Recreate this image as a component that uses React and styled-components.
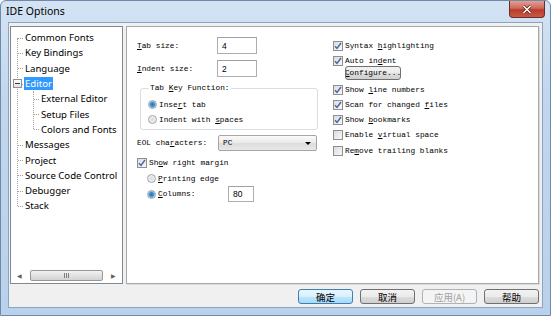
import React from "react";
import styled, { createGlobalStyle } from "styled-components";

const GlobalStyle = createGlobalStyle`
  html, body {
    margin: 0;
    padding: 0;
    background: #ffffff;
  }
  body {
    width: 551px;
    height: 316px;
    overflow: hidden;
  }
`;

const Window = styled.div`
  width: 551px;
  height: 316px;
  box-sizing: border-box;
  display: flex;
  flex-direction: column;
  background: linear-gradient(to bottom, #d3e3f4 0%, #c2d7ee 30%, #b9d1ea 100%);
  border: 1px solid #6f89a8;
  border-radius: 6px 6px 0 0;
  font-family: "Noto Sans", "Liberation Sans", sans-serif;
`;

const TitleBar = styled.div`
  height: 21px;
  flex: none;
  display: flex;
  justify-content: space-between;
  align-items: flex-start;
  padding-left: 5px;
`;

const Title = styled.div`
  font-size: 10.5px;
  line-height: 20px;
  color: #000;
`;

const CloseButton = styled.div`
  width: 36px;
  height: 17px;
  margin-right: 5px;
  box-sizing: border-box;
  border: 1px solid #6e2c27;
  border-top: none;
  border-radius: 0 0 4px 4px;
  background: linear-gradient(to bottom, #e29f93 0%, #d0695a 45%, #b83b2c 55%, #c75a46 100%);
  display: flex;
  align-items: center;
  justify-content: center;
`;

const Client = styled.div`
  flex: 1;
  margin: 0 7px 7px 7px;
  box-sizing: border-box;
  background: #f0f0f0;
  border: 1px solid #8da4c1;
  padding: 3px 3px 3px 1px;
  display: flex;
  flex-direction: column;
`;

const Main = styled.div`
  height: 258px;
  display: flex;
  gap: 3px;
`;

const TreeBox = styled.div`
  width: 113px;
  box-sizing: border-box;
  background: #fff;
  border: 1px solid #828790;
  display: flex;
  flex-direction: column;
`;

const TreeList = styled.div`
  flex: 1;
  padding-top: 3px;
  font-size: 9.6px;
  color: #000;
`;

const Branch = styled.div`
  position: relative;
  &::before {
    content: "";
    position: absolute;
    left: ${p => p.$x}px;
    top: ${p => p.$top}px;
    height: ${p => p.$height}px;
    border-left: 1px dotted #a0a0a0;
  }
`;

const TreeRow = styled.div`
  position: relative;
  height: 15.3px;
  display: flex;
  align-items: center;
  padding-left: ${p => p.$level * 16 + 13}px;
  white-space: nowrap;
  &::after {
    content: "";
    position: absolute;
    left: ${p => p.$level * 16 + 7}px;
    width: 5px;
    top: 50%;
    border-top: 1px dotted #a0a0a0;
  }
`;

const TreeLabel = styled.span`
  padding: 0 1px;
  line-height: 13px;
  background: ${p => (p.$selected ? "#3399ff" : "transparent")};
  color: ${p => (p.$selected ? "#fff" : "#000")};
`;

const Expander = styled.div`
  position: absolute;
  left: 2px;
  top: 3px;
  width: 9px;
  height: 9px;
  box-sizing: border-box;
  border: 1px solid #919191;
  background: linear-gradient(to bottom, #fff, #e3e3e3);
  z-index: 1;
  &::after {
    content: "";
    position: absolute;
    left: 1px;
    top: 3px;
    width: 5px;
    border-top: 1px solid #3c3c3c;
  }
`;

const HScroll = styled.div`
  height: 15px;
  flex: none;
  display: flex;
  align-items: center;
  background: #fff;
  padding: 0 1px;
`;

const ScrollArrow = styled.div`
  width: 15px;
  height: 13px;
  display: flex;
  align-items: center;
  justify-content: center;
  color: #606060;
  font-size: 6px;
`;

const Thumb = styled.div`
  flex: 1;
  height: 11px;
  margin: 0 3px;
  box-sizing: border-box;
  border: 1px solid #979797;
  border-radius: 2px;
  background: linear-gradient(to bottom, #f3f3f3, #e2e2e2 50%, #d2d2d2);
  display: flex;
  align-items: center;
  justify-content: center;
  gap: 1px;
`;

const Grip = styled.span`
  width: 1px;
  height: 5px;
  background: #7d7d7d;
`;

const Panel = styled.div`
  flex: 1;
  box-sizing: border-box;
  background: #fff;
  border: 1px solid #a8a8a8;
  box-shadow: 1px 1px 0 #dadada;
  padding: 10px 0 0 10px;
  display: flex;
  font-family: "Liberation Mono", "DejaVu Sans Mono", monospace;
  font-size: 7.8px;
  color: #000;
`;

const LeftCol = styled.div`
  width: 181px;
  display: flex;
  flex-direction: column;
`;

const RightCol = styled.div`
  margin-left: 15px;
  display: flex;
  flex-direction: column;
`;

const FieldRow = styled.div`
  display: flex;
  align-items: center;
  flex: none;
  height: ${p => p.$h || 17}px;
  margin-top: ${p => p.$mt || 0}px;
  margin-left: ${p => p.$ml || 0}px;
`;

const Label = styled.span`
  width: ${p => p.$w || 80}px;
  flex: none;
`;

const TextBox = styled.div`
  width: ${p => p.$w}px;
  height: ${p => p.$h || 17}px;
  box-sizing: border-box;
  border: 1px solid #abadb3;
  border-top-color: #9ea0a6;
  background: #fff;
  padding-left: 4px;
  display: flex;
  align-items: center;
  font-family: "Liberation Sans", sans-serif;
  font-size: 8.5px;
`;

const Mn = styled.span`
  text-decoration: underline;
  text-underline-offset: 1px;
`;

const GroupBox = styled.fieldset`
  margin: 6px 0 0 3px;
  width: 178px;
  box-sizing: border-box;
  padding: 4px 0 2px 6px;
  border: 1px solid #d5dfe5;
  border-radius: 3px;
`;

const Legend = styled.legend`
  padding: 0 1px;
  margin-left: 2px;
  line-height: 10px;
`;

const RadioDot = styled.span`
  width: 9px;
  height: 9px;
  flex: none;
  box-sizing: border-box;
  border-radius: 50%;
  border: 1px solid #a0a3a8;
  background: ${p =>
    p.$on
      ? "radial-gradient(circle, #2b78b8 0, #3d8fd0 2px, #9cc4e6 3.2px, #e8eef3 3.6px)"
      : "radial-gradient(circle, #dcdcdc 0, #f4f4f4 4px)"};
  margin-right: 2px;
`;

const CheckBox = styled.span`
  width: 10px;
  height: 10px;
  flex: none;
  box-sizing: border-box;
  border: 1px solid #8f8f8f;
  background: linear-gradient(135deg, #dcdcdc, #f8f8f8);
  margin-right: 2px;
  display: flex;
  align-items: center;
  justify-content: center;
`;

const Select = styled.div`
  width: 99px;
  height: 16px;
  box-sizing: border-box;
  border: 1px solid #a5a5a5;
  border-radius: 2px;
  background: linear-gradient(to bottom, #fafafa, #eaeaea 50%, #dcdcdc 51%, #e8e8e8);
  display: flex;
  align-items: center;
  justify-content: space-between;
  padding: 0 5px 0 4px;
`;

const Caret = styled.span`
  width: 0;
  height: 0;
  border-left: 3px solid transparent;
  border-right: 3px solid transparent;
  border-top: 3px solid #000;
`;

const SmallButton = styled.div`
  width: 56px;
  height: 14px;
  flex: none;
  box-sizing: border-box;
  border: 1px solid #707070;
  border-radius: 3px;
  background: linear-gradient(to bottom, #f2f2f2, #ebebeb 50%, #dddddd 51%, #cfcfcf);
  display: flex;
  align-items: center;
  justify-content: center;
  white-space: nowrap;
  overflow: hidden;
  margin: -2px 0 1px 12px;
`;

const ButtonRow = styled.div`
  margin-top: 5px;
  height: 15px;
  display: flex;
  justify-content: flex-end;
  gap: 7px;
`;

const DialogButton = styled.div`
  width: 55px;
  height: 15px;
  box-sizing: border-box;
  border: 1px solid ${p => (p.$default ? "#3c7fb1" : p.$disabled ? "#adb2b5" : "#707070")};
  border-radius: 3px;
  background: ${p =>
    p.$disabled
      ? "#f4f4f4"
      : p.$default
      ? "linear-gradient(to bottom, #eaf6fd, #d9f0fc 50%, #bee6fd 51%, #a7d9f5)"
      : "linear-gradient(to bottom, #f2f2f2, #ebebeb 50%, #dddddd 51%, #cfcfcf)"};
  color: ${p => (p.$disabled ? "#a0a0a0" : "#000")};
  font-family: "Noto Sans CJK SC", "Noto Sans", sans-serif;
  font-size: 9.5px;
  display: flex;
  align-items: center;
  justify-content: center;
`;

const Check = () => (
  <svg width="8" height="8" viewBox="0 0 8 8">
    <path d="M1 4.2 L3 6.4 L7 1" fill="none" stroke="#4a67a8" strokeWidth="1.5" />
  </svg>
);

const CheckItem = ({ on, children, mt }) => (
  <FieldRow $h={15} $mt={mt}>
    <CheckBox>{on && <Check />}</CheckBox>
    <span>{children}</span>
  </FieldRow>
);

const RadioItem = ({ on, children, ml, mt, h = 15 }) => (
  <FieldRow $h={h} $ml={ml} $mt={mt}>
    <RadioDot $on={on} />
    <span>{children}</span>
  </FieldRow>
);

const rootItems = [
  "Common Fonts",
  "Key Bindings",
  "Language",
  "Editor",
  "Messages",
  "Project",
  "Source Code Control",
  "Debugger",
  "Stack",
];

const editorChildren = ["External Editor", "Setup Files", "Colors and Fonts"];

const ROW = 15.3;

const Tree = () => (
  <TreeBox>
    <TreeList>
      <Branch $x={6} $top={ROW / 2} $height={ROW * 11}>
        {rootItems.map(item =>
          item === "Editor" ? (
            <React.Fragment key={item}>
              <TreeRow $level={0}>
                <Expander />
                <TreeLabel $selected>Editor</TreeLabel>
              </TreeRow>
              <Branch $x={22} $top={0} $height={ROW * 2.5}>
                {editorChildren.map(child => (
                  <TreeRow key={child} $level={1}>
                    <TreeLabel>{child}</TreeLabel>
                  </TreeRow>
                ))}
              </Branch>
            </React.Fragment>
          ) : (
            <TreeRow key={item} $level={0}>
              <TreeLabel>{item}</TreeLabel>
            </TreeRow>
          )
        )}
      </Branch>
    </TreeList>
    <HScroll>
      <ScrollArrow>◀</ScrollArrow>
      <Thumb>
        <Grip />
        <Grip />
        <Grip />
      </Thumb>
      <ScrollArrow>▶</ScrollArrow>
    </HScroll>
  </TreeBox>
);

const EditorPage = () => (
  <Panel>
    <LeftCol>
      <FieldRow>
        <Label>
          <Mn>T</Mn>ab size:
        </Label>
        <TextBox $w={40}>4</TextBox>
      </FieldRow>
      <FieldRow $mt={6}>
        <Label>
          <Mn>I</Mn>ndent size:
        </Label>
        <TextBox $w={40}>2</TextBox>
      </FieldRow>
      <GroupBox>
        <Legend>
          Tab <Mn>K</Mn>ey Function:
        </Legend>
        <RadioItem on ml={1}>
          Inse<Mn>r</Mn>t tab
        </RadioItem>
        <RadioItem ml={1}>
          Indent with <Mn>s</Mn>paces
        </RadioItem>
      </GroupBox>
      <FieldRow $h={16} $mt={5}>
        <Label $w={81}>
          EOL cha<Mn>r</Mn>acters:
        </Label>
        <Select>
          <span>PC</span>
          <Caret />
        </Select>
      </FieldRow>
      <CheckItem on mt={4}>
        Sh<Mn>o</Mn>w right margin
      </CheckItem>
      <RadioItem ml={10} mt={1}>
        <Mn>P</Mn>rinting edge
      </RadioItem>
      <FieldRow $h={16} $ml={10}>
        <RadioDot $on />
        <Label $w={70}>
          <Mn>C</Mn>olumns:
        </Label>
        <TextBox $w={26} $h={16}>
          80
        </TextBox>
      </FieldRow>
    </LeftCol>
    <RightCol>
      <CheckItem on mt={1}>
        Syntax <Mn>h</Mn>ighlighting
      </CheckItem>
      <CheckItem on>
        Auto in<Mn>d</Mn>ent
      </CheckItem>
      <SmallButton>
        <span>
          <Mn>C</Mn>onfigure...
        </span>
      </SmallButton>
      <CheckItem on mt={1}>
        Show <Mn>l</Mn>ine numbers
      </CheckItem>
      <CheckItem on>
        Scan for changed <Mn>f</Mn>iles
      </CheckItem>
      <CheckItem on>
        Show <Mn>b</Mn>ookmarks
      </CheckItem>
      <CheckItem>
        Enable <Mn>v</Mn>irtual space
      </CheckItem>
      <CheckItem mt={1}>
        Re<Mn>m</Mn>ove trailing blanks
      </CheckItem>
    </RightCol>
  </Panel>
);

const App = () => (
  <>
    <GlobalStyle />
    <Window>
      <TitleBar>
        <Title>IDE Options</Title>
        <CloseButton>
          <svg width="10" height="9" viewBox="0 0 10 9">
            <path d="M1.5 1 L8.5 8 M8.5 1 L1.5 8" stroke="#5a1a14" strokeWidth="3" />
            <path d="M1.5 1 L8.5 8 M8.5 1 L1.5 8" stroke="#fff" strokeWidth="1.6" />
          </svg>
        </CloseButton>
      </TitleBar>
      <Client>
        <Main>
          <Tree />
          <EditorPage />
        </Main>
        <ButtonRow>
          <DialogButton $default>确定</DialogButton>
          <DialogButton>取消</DialogButton>
          <DialogButton $disabled>应用(A)</DialogButton>
          <DialogButton>帮助</DialogButton>
        </ButtonRow>
      </Client>
    </Window>
  </>
);

export default App;
